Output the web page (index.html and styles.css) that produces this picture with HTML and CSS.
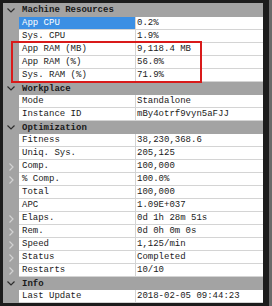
FILE: index.html
```html
<!DOCTYPE html>
<html lang="en">
<head>
    <meta charset="UTF-8">
    <title>Properties</title>
    <link rel="stylesheet" href="styles.css">
</head>
<body>
<div class="frame">
    <div class="grid">
        <div class="cat"><span class="gut"><svg class="chev-down" viewBox="0 0 8 5"><polyline points="0.5,0.5 4,4 7.5,0.5"/></svg></span><span class="cat-name">Machine Resources</span></div>
        <div class="row selected"><span class="gut"></span><span class="name">App CPU</span><span class="val">0.2%</span></div>
        <div class="row"><span class="gut"></span><span class="name">Sys. CPU</span><span class="val">1.9%</span></div>
        <div class="row"><span class="gut"></span><span class="name">App RAM (MB)</span><span class="val">9,118.4 MB</span></div>
        <div class="row"><span class="gut"></span><span class="name">App RAM (%)</span><span class="val">56.0%</span></div>
        <div class="row"><span class="gut"></span><span class="name">Sys. RAM (%)</span><span class="val">71.9%</span></div>

        <div class="cat"><span class="gut"><svg class="chev-down" viewBox="0 0 8 5"><polyline points="0.5,0.5 4,4 7.5,0.5"/></svg></span><span class="cat-name">Workplace</span></div>
        <div class="row"><span class="gut"></span><span class="name">Mode</span><span class="val">Standalone</span></div>
        <div class="row"><span class="gut"></span><span class="name">Instance ID</span><span class="val">mBy4otrf9vyn5aFJJ</span></div>

        <div class="cat"><span class="gut"><svg class="chev-down" viewBox="0 0 8 5"><polyline points="0.5,0.5 4,4 7.5,0.5"/></svg></span><span class="cat-name">Optimization</span></div>
        <div class="row"><span class="gut"></span><span class="name">Fitness</span><span class="val">38,230,368.6</span></div>
        <div class="row"><span class="gut"></span><span class="name">Uniq. Sys.</span><span class="val">205,125</span></div>
        <div class="row"><span class="gut"><svg class="chev-right" viewBox="0 0 5 8"><polyline points="0.5,0.5 4,4 0.5,7.5"/></svg></span><span class="name">Comp.</span><span class="val">100,000</span></div>
        <div class="row"><span class="gut"><svg class="chev-right" viewBox="0 0 5 8"><polyline points="0.5,0.5 4,4 0.5,7.5"/></svg></span><span class="name">% Comp.</span><span class="val">100.0%</span></div>
        <div class="row"><span class="gut"></span><span class="name">Total</span><span class="val">100,000</span></div>
        <div class="row"><span class="gut"></span><span class="name">APC</span><span class="val">1.09E+037</span></div>
        <div class="row"><span class="gut"><svg class="chev-right" viewBox="0 0 5 8"><polyline points="0.5,0.5 4,4 0.5,7.5"/></svg></span><span class="name">Elaps.</span><span class="val">0d 1h 28m 51s</span></div>
        <div class="row"><span class="gut"><svg class="chev-right" viewBox="0 0 5 8"><polyline points="0.5,0.5 4,4 0.5,7.5"/></svg></span><span class="name">Rem.</span><span class="val">0d 0h 0m 0s</span></div>
        <div class="row"><span class="gut"><svg class="chev-right" viewBox="0 0 5 8"><polyline points="0.5,0.5 4,4 0.5,7.5"/></svg></span><span class="name">Speed</span><span class="val">1,125/min</span></div>
        <div class="row"><span class="gut"><svg class="chev-right" viewBox="0 0 5 8"><polyline points="0.5,0.5 4,4 0.5,7.5"/></svg></span><span class="name">Status</span><span class="val">Completed</span></div>
        <div class="row"><span class="gut"><svg class="chev-right" viewBox="0 0 5 8"><polyline points="0.5,0.5 4,4 0.5,7.5"/></svg></span><span class="name">Restarts</span><span class="val">10/10</span></div>

        <div class="cat"><span class="gut"><svg class="chev-down" viewBox="0 0 8 5"><polyline points="0.5,0.5 4,4 7.5,0.5"/></svg></span><span class="cat-name">Info</span></div>
        <div class="row"><span class="gut"></span><span class="name">Last Update</span><span class="val">2018-02-05 09:44:23</span></div>
    </div>
    <!-- highlight box drawn over the RAM rows -->
    <div class="callout"></div>
</div>
</body>
</html>
```

FILE: styles.css
```css
* {
    margin: 0;
    padding: 0;
    box-sizing: border-box;
}

body {
    background-color: #1c1c1c;
    font-family: "Liberation Mono", "DejaVu Sans Mono", monospace;
    font-size: 9px;
    color: #1a1a1a;
}

.frame {
    position: relative;
    width: 272px;
    height: 306px;
    padding: 3px 6px 3px 3px;
    background-color: #1c1c1c;
    border-right: 3px solid #6a6a6a;
}

.grid {
    display: flex;
    flex-direction: column;
    height: 100%;
    background-color: #a3a3a3;
}

.cat {
    display: flex;
    align-items: center;
    height: 13px;
    background-color: #a3a3a3;
}

.cat:first-child {
    height: 14px;
}

.cat-name {
    font-weight: bold;
    padding-left: 3px;
    line-height: 12px;
}

.row {
    display: grid;
    grid-template-columns: 16px 117px 1fr;
    height: 13px;
}

.gut {
    width: 16px;
    height: 100%;
    display: flex;
    align-items: center;
    justify-content: center;
}

.name,
.val {
    background-color: #ffffff;
    border-bottom: 1px solid #d4d4d4;
    line-height: 12px;
    white-space: nowrap;
    overflow: hidden;
}

.name {
    padding-left: 3px;
    border-right: 1px solid #d4d4d4;
}

.val {
    padding-left: 1px;
}

.selected .name {
    background-color: #3b8fe4;
    color: #ffffff;
}

.chev-down {
    width: 8px;
    height: 5px;
    fill: none;
    stroke: #2e2e2e;
    stroke-width: 1.2;
}

.chev-right {
    width: 5px;
    height: 8px;
    fill: none;
    stroke: #d2d2d2;
    stroke-width: 1.2;
}

.callout {
    position: absolute;
    left: 11px;
    top: 41px;
    width: 191px;
    height: 42px;
    border: 2px solid #d91a1a;
}
```
